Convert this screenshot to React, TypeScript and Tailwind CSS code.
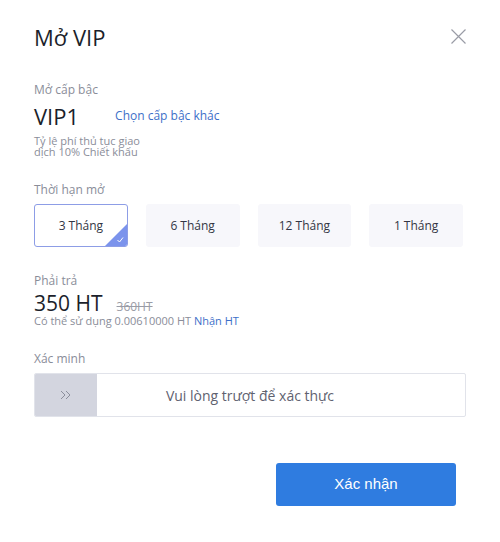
import { useState } from "react";

const THOI_HAN = ["3 Tháng", "6 Tháng", "12 Tháng", "1 Tháng"];

function Nhan({ children }: { children: React.ReactNode }) {
  return <div className="text-[12px] leading-[16px] text-[#8a8d99]">{children}</div>;
}

export default function App() {
  const [chon, setChon] = useState(0);

  return (
    <div
      className="relative h-[542px] w-[500px] bg-white px-[34px] pt-[22px] text-[#1c1f2b]"
      style={{ fontFamily: '"Open Sans", "Noto Sans", sans-serif' }}
    >
      {/* tiêu đề + đóng */}
      <div className="flex items-center justify-between">
        <h1 className="text-[22px] leading-[30px] font-normal">Mở VIP</h1>
        <button className="mt-[-1px] text-[#9a9ca6]" aria-label="Đóng">
          <svg width="15" height="15" viewBox="0 0 15 15" fill="none" stroke="currentColor" strokeWidth="1.2">
            <path d="M0.5 0.5 L14.5 14.5 M14.5 0.5 L0.5 14.5" />
          </svg>
        </button>
      </div>

      {/* cấp bậc */}
      <div className="mt-[30px]">
        <Nhan>Mở cấp bậc</Nhan>
        <div className="mt-[5px] flex items-center gap-[36px]">
          <span className="text-[22px] leading-[26px]">VIP1</span>
          <span className="text-[12px] text-[#3d6fc8]">Chọn cấp bậc khác</span>
        </div>
        <p className="mt-[6px] w-[122px] text-[11px] leading-[11px] text-[#8a8d99]">
          Tỷ lệ phí thủ tục giao dịch 10% Chiết khấu
        </p>
      </div>

      {/* thời hạn */}
      <div className="mt-[25px]">
        <Nhan>Thời hạn mở</Nhan>
        <div className="mt-[6px] grid grid-cols-4 gap-[18px] pr-[3px]">
          {THOI_HAN.map((t, i) => (
            <button
              key={t}
              onClick={() => setChon(i)}
              className={
                i === chon
                  ? "relative flex h-[43px] items-center justify-center overflow-hidden rounded-[3px] border border-[#8d9de6] bg-white text-[12px] text-[#333644]"
                  : "relative flex h-[43px] items-center justify-center rounded-[3px] border border-transparent bg-[#f7f7fb] text-[12px] text-[#333644]"
              }
            >
              {t}
              {i === chon ? (
                <span className="absolute bottom-0 right-0 h-[22px] w-[22px]">
                  <svg width="22" height="22" viewBox="0 0 22 22">
                    <path d="M22 0 L22 22 L0 22 Z" fill="#7b93ec" />
                    <path d="M12.5 16 L14.5 18 L18 13.5" fill="none" stroke="#fff" strokeWidth="1" />
                  </svg>
                </span>
              ) : null}
            </button>
          ))}
        </div>
      </div>

      {/* phải trả */}
      <div className="mt-[26px]">
        <Nhan>Phải trả</Nhan>
        <div className="mt-[3px] flex items-baseline gap-[14px]">
          <span className="text-[21px] leading-[22px]">350 HT</span>
          <span className="text-[12px] leading-[14px] text-[#9a9ca6] line-through">360HT</span>
        </div>
        <div className="text-[11px] leading-[14px] text-[#8a8d99]">
          Có thể sử dụng 0.00610000 HT <span className="text-[#3d6fc8]">Nhận HT</span>
        </div>
      </div>

      {/* xác minh */}
      <div className="mt-[23px]">
        <Nhan>Xác minh</Nhan>
        <div className="relative mt-[6px] flex h-[44px] w-[432px] overflow-hidden rounded-[2px] border border-[#e1e3ea]">
          <div className="flex w-[62px] items-center justify-center bg-[#d3d5df] text-[#8b8e9c]">
            <svg width="12" height="10" viewBox="0 0 12 10" fill="none" stroke="currentColor" strokeWidth="1">
              <path d="M1 1 L5 5 L1 9 M6 1 L10 5 L6 9" />
            </svg>
          </div>
          <div className="absolute inset-0 flex items-center justify-center text-[14px] text-[#5f6270]">
            Vui lòng trượt để xác thực
          </div>
        </div>
      </div>

      {/* xác nhận */}
      <div className="mt-[46px] flex justify-end pr-[10px]">
        <button
          className="h-[43px] w-[180px] rounded-[3px] bg-[#2f7ce0] text-[15px] text-white"
          style={{ fontFamily: '"Liberation Sans", Arial, sans-serif' }}
        >
          Xác nhận
        </button>
      </div>
    </div>
  );
}
